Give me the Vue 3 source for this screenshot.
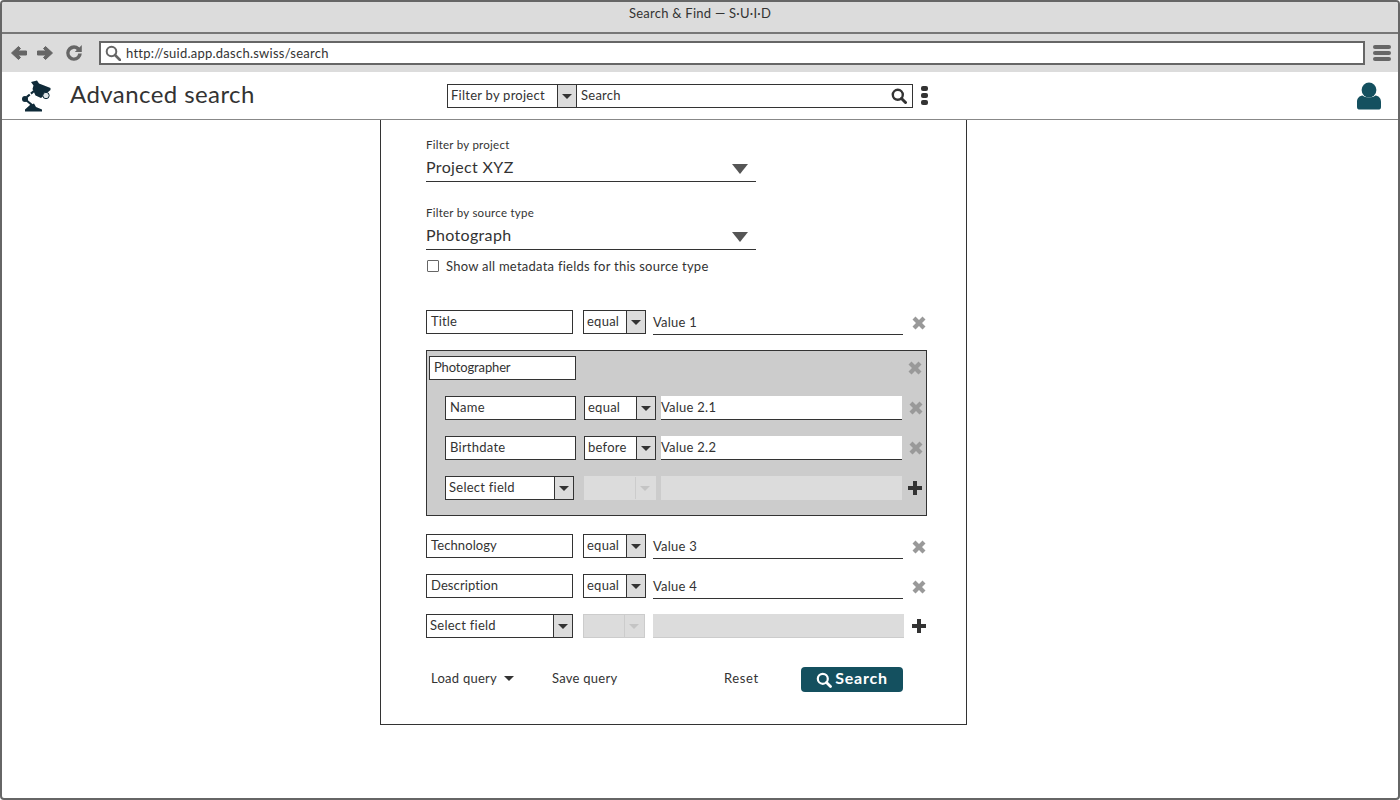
<script setup>
const topFields = [
  { name: "Title", op: "equal", value: "Value 1" },
];
const subFields = [
  { name: "Name", op: "equal", value: "Value 2.1" },
  { name: "Birthdate", op: "before", value: "Value 2.2" },
];
const lowerFields = [
  { name: "Technology", op: "equal", value: "Value 3" },
  { name: "Description", op: "equal", value: "Value 4" },
];
</script>

<template>
  <div class="window">
    <div class="titlebar">Search &amp; Find — S·U·I·D</div>
    <div class="toolbar">
      <svg class="nav" viewBox="0 0 18 16" width="18" height="16"><path d="M8.5 1.5 L1.5 8 L8.5 14.5 L10.5 12.4 L8 10 H16.5 V6 H8 L10.5 3.6 Z" /></svg>
      <svg class="nav second" viewBox="0 0 18 16" width="18" height="16"><path d="M9.5 1.5 L16.5 8 L9.5 14.5 L7.5 12.4 L10 10 H1.5 V6 H10 L7.5 3.6 Z" /></svg>
      <svg class="reload" viewBox="0 0 16 16" width="16" height="16"><path d="M8 0.2 A7.8 7.8 0 1 0 15.8 8.4 H12.2 A4.3 4.3 0 1 1 10.8 5 L8.8 7 H15.8 V0 L13.4 2.4 A7.8 7.8 0 0 0 8 0.2 Z" /></svg>
      <div class="address">
        <svg viewBox="0 0 16 16" width="16" height="16" class="addr-icon"><circle cx="6.5" cy="6.5" r="4.8" fill="none" stroke="#666" stroke-width="2" /><path d="M10 10 L15 15" stroke="#666" stroke-width="2.6" stroke-linecap="round" /></svg>
        <span>http://suid.app.dasch.swiss/search</span>
      </div>
      <div class="burger"><i></i><i></i><i></i></div>
    </div>

    <header class="appbar">
      <svg class="logo" viewBox="0 0 30 32" width="30" height="32">
        <path fill="#0f2a38" d="M9 2 L15 0.5 L17 3.5 L28.5 8 L28.5 10 L19 18 L13.5 15.5 L10.5 9 L11.5 5.5 Z" />
        <circle cx="24" cy="15.5" r="3.2" fill="#dfe5e8" stroke="#0f2a38" stroke-width="1" />
        <path stroke="#0f2a38" stroke-width="2.2" fill="none" stroke-dasharray="4 1.5" d="M12 11 L3 18.5" />
        <path stroke="#0f2a38" stroke-width="2.2" fill="none" d="M4 20 L10 25" />
        <circle cx="3" cy="19" r="3" fill="#0f2a38" />
        <path fill="#0f2a38" d="M8 25 L12 23.5 L14 27 L20 29.5 L20 31.5 L3 31.5 L3 29.5 Z" />
      </svg>
      <h1>Advanced search</h1>
      <div class="top-search">
        <div class="pick wide">
          <span class="pick-text">Filter by project</span>
          <span class="pick-arrow"></span>
        </div>
        <div class="search-box">
          <span>Search</span>
          <svg viewBox="0 0 16 16" width="16" height="16"><circle cx="6.8" cy="6.8" r="5" fill="none" stroke="#333" stroke-width="2.4" /><path d="M10.5 10.5 L14.5 14.5" stroke="#333" stroke-width="3" stroke-linecap="round" /></svg>
        </div>
        <div class="kebab"><i></i><i></i><i></i></div>
      </div>
      <svg class="user" viewBox="0 0 24 28" width="24" height="28">
        <circle cx="12" cy="8" r="7.4" fill="#14505f" />
        <path fill="#14505f" d="M5.5 13.5 C8 16 16 16 18.5 13.5 C22 14 24 16.5 24 20 V25 C24 27 23 27.6 21 27.6 H3 C1 27.6 0 27 0 25 V20 C0 16.5 2 14 5.5 13.5 Z" />
      </svg>
    </header>

    <main class="stage">
      <section class="panel">
        <label class="small-label">Filter by project</label>
        <div class="big-select">
          <span>Project XYZ</span>
          <b class="big-arrow"></b>
        </div>
        <label class="small-label second-label">Filter by source type</label>
        <div class="big-select">
          <span>Photograph</span>
          <b class="big-arrow"></b>
        </div>
        <div class="check-row">
          <span class="check"></span>
          <span>Show all metadata fields for this source type</span>
        </div>

        <div class="row first-row" v-for="f in topFields" :key="f.name">
          <div class="name">{{ f.name }}</div>
          <div class="op"><span>{{ f.op }}</span><i class="pick-arrow"></i></div>
          <div class="val">{{ f.value }}</div>
          <svg class="cross" viewBox="0 0 14 14" width="14" height="14"><path d="M0.5 3.5 L3.5 0.5 L7 4 L10.5 0.5 L13.5 3.5 L10 7 L13.5 10.5 L10.5 13.5 L7 10 L3.5 13.5 L0.5 10.5 L4 7 Z" /></svg>
        </div>

        <div class="group">
          <div class="group-head">
            <div class="name head-name">Photographer</div>
            <svg class="cross" viewBox="0 0 14 14" width="14" height="14"><path d="M0.5 3.5 L3.5 0.5 L7 4 L10.5 0.5 L13.5 3.5 L10 7 L13.5 10.5 L10.5 13.5 L7 10 L3.5 13.5 L0.5 10.5 L4 7 Z" /></svg>
          </div>
          <div class="sub" v-for="f in subFields" :key="f.name">
            <div class="name sub-name">{{ f.name }}</div>
            <div class="op sub-op"><span>{{ f.op }}</span><i class="pick-arrow"></i></div>
            <div class="val sub-val">{{ f.value }}</div>
            <svg class="cross" viewBox="0 0 14 14" width="14" height="14"><path d="M0.5 3.5 L3.5 0.5 L7 4 L10.5 0.5 L13.5 3.5 L10 7 L13.5 10.5 L10.5 13.5 L7 10 L3.5 13.5 L0.5 10.5 L4 7 Z" /></svg>
          </div>
          <div class="sub">
            <div class="field-pick sub-pick"><span>Select field</span><i class="pick-arrow"></i></div>
            <div class="op-off sub-off"><i></i></div>
            <div class="val-off sub-val-off"></div>
            <svg class="plus" viewBox="0 0 14 14" width="14" height="14"><path d="M5 0 H9 V5 H14 V9 H9 V14 H5 V9 H0 V5 H5 Z" /></svg>
          </div>
        </div>

        <div class="row lower" v-for="f in lowerFields" :key="f.name">
          <div class="name">{{ f.name }}</div>
          <div class="op"><span>{{ f.op }}</span><i class="pick-arrow"></i></div>
          <div class="val">{{ f.value }}</div>
          <svg class="cross" viewBox="0 0 14 14" width="14" height="14"><path d="M0.5 3.5 L3.5 0.5 L7 4 L10.5 0.5 L13.5 3.5 L10 7 L13.5 10.5 L10.5 13.5 L7 10 L3.5 13.5 L0.5 10.5 L4 7 Z" /></svg>
        </div>
        <div class="row lower">
          <div class="field-pick"><span>Select field</span><i class="pick-arrow"></i></div>
          <div class="op-off"><i></i></div>
          <div class="val-off"></div>
          <svg class="plus" viewBox="0 0 14 14" width="14" height="14"><path d="M5 0 H9 V5 H14 V9 H9 V14 H5 V9 H0 V5 H5 Z" /></svg>
        </div>

        <div class="actions">
          <span class="load">Load query <i></i></span>
          <span class="save">Save query</span>
          <span class="reset">Reset</span>
          <button class="go">
            <svg viewBox="0 0 16 16" width="16" height="16"><circle cx="6.8" cy="6.8" r="5" fill="none" stroke="#fff" stroke-width="2.2" /><path d="M10.5 10.5 L14.5 14.5" stroke="#fff" stroke-width="2.8" stroke-linecap="round" /></svg>
            Search
          </button>
        </div>
      </section>
    </main>
  </div>
</template>

<style>
html, body { margin: 0; background: #fff; }
</style>

<style scoped>
.window {
  width: 1400px;
  height: 800px;
  box-sizing: border-box;
  border: 2px solid #666;
  border-radius: 4px;
  overflow: hidden;
  background: #fff;
  font-family: Lato, "Noto Sans", sans-serif;
  font-size: 13px;
  color: #333;
  letter-spacing: 0.25px;
}
.titlebar {
  height: 30px;
  line-height: 23px;
  text-align: center;
  background: #dcdcdc;
  border-bottom: 2px solid #777;
  box-sizing: content-box;
}
.toolbar {
  height: 38px;
  background: #dcdcdc;
  display: flex;
  align-items: center;
  padding-left: 8px;
}
.nav { fill: #666; stroke: #666; stroke-width: 1; stroke-linejoin: round; }
.nav.second { margin-left: 8px; }
.reload { fill: #666; margin-left: 12px; }
.address {
  width: 1266px;
  height: 24px;
  box-sizing: border-box;
  margin-left: 17px;
  background: #fff;
  border: 2px solid #666;
  display: flex;
  align-items: center;
  padding-left: 4px;
  gap: 5px;
}
.addr-icon { flex: none; }
.burger {
  margin-left: 8px;
  display: flex;
  flex-direction: column;
  gap: 2px;
}
.burger i { display: block; width: 18px; height: 4px; border-radius: 2px; background: #666; }

.appbar {
  height: 47px;
  border-bottom: 1px solid #888;
  display: flex;
  align-items: center;
  padding-left: 20px;
  position: relative;
}
.logo { flex: none; }
h1 {
  margin: 0 0 4px 18px;
  font-size: 24px;
  font-weight: 400;
  width: 377px;
  letter-spacing: 0.42px;
  flex: none;
}
.top-search { display: flex; align-items: center; height: 24px; }
.pick { display: flex; }
.pick.wide {
  width: 129px;
  height: 24px;
  box-sizing: border-box;
  border: 1px solid #333;
  border-right: 0;
  align-items: center;
  justify-content: space-between;
  padding-left: 3px;
}
.pick-text { padding-bottom: 2px; }
.pick-arrow {
  flex: none;
  width: 19px;
  height: 100%;
  box-sizing: border-box;
  background: #dcdcdc;
  border-left: 1px solid #333;
  position: relative;
  display: block;
}
.pick-arrow::after {
  content: "";
  position: absolute;
  left: 50%;
  top: 50%;
  margin: -2px 0 0 -5px;
  border: 5px solid transparent;
  border-top: 5px solid #333;
  border-bottom: 0;
}
.search-box {
  width: 337px;
  height: 24px;
  box-sizing: border-box;
  border: 1px solid #333;
  display: flex;
  align-items: center;
  justify-content: space-between;
  padding: 0 5px 0 4px;
}
.search-box span { padding-bottom: 2px; }
.kebab { margin-left: 8px; display: flex; flex-direction: column; gap: 2px; }
.kebab i { display: block; width: 7px; height: 5px; border-radius: 2px; background: #333; }
.user { position: absolute; left: 1355px; top: 10px; }

.stage { display: flex; padding-left: 378px; }
.panel {
  width: 587px;
  height: 606px;
  box-sizing: border-box;
  margin-top: -1px;
  border: 1px solid #333;
  padding: 18px 0 0 45px;
}
.small-label { display: block; font-size: 11.5px; line-height: 14px; }
.second-label { margin-top: 24px; }
.big-select {
  width: 330px;
  height: 30px;
  box-sizing: border-box;
  border-bottom: 1px solid #333;
  font-size: 16px;
  letter-spacing: 0.35px;
  display: flex;
  justify-content: space-between;
  align-items: center;
}
.big-arrow {
  margin-right: 8px;
  margin-top: 5px;
  border: 8px solid transparent;
  border-top: 10px solid #555;
  border-bottom: 0;
}
.check-row { display: flex; align-items: center; gap: 7px; margin-top: 8px; height: 16px; padding-left: 1px; }
.check { width: 12px; height: 12px; border: 1px solid #666; border-radius: 1px; box-sizing: border-box; display: block; }

.row { display: flex; align-items: flex-start; height: 24px; }
.first-row { margin-top: 36px; }
.lower { margin-top: 16px; }
.group + .lower { margin-top: 18px; }
.name {
  width: 147px;
  height: 24px;
  box-sizing: border-box;
  border: 1px solid #333;
  background: #fff;
  line-height: 21px;
  padding-left: 4px;
  letter-spacing: 0.1px;
  flex: none;
}
.head-name { padding-left: 4px; letter-spacing: -0.15px; }
.op {
  width: 63px;
  height: 24px;
  box-sizing: border-box;
  border: 1px solid #333;
  background: #fff;
  display: flex;
  justify-content: space-between;
  line-height: 21px;
  padding-left: 3px;
  margin-left: 10px;
  flex: none;
}
.val {
  width: 250px;
  height: 25px;
  box-sizing: border-box;
  border-bottom: 1px solid #333;
  margin-left: 7px;
  line-height: 25px;
  flex: none;
}
.cross { fill: #999; margin-left: 9px; margin-top: 6px; flex: none; }
.plus { fill: #333; margin-left: 8px; margin-top: 5px; flex: none; }

.field-pick {
  width: 147px;
  height: 24px;
  box-sizing: border-box;
  border: 1px solid #333;
  background: #fff;
  display: flex;
  justify-content: space-between;
  line-height: 21px;
  padding-left: 3px;
  flex: none;
}
.op-off {
  width: 62px;
  height: 24px;
  box-sizing: border-box;
  background: #dcdcdc;
  border: 1px solid #ccc;
  margin-left: 10px;
  position: relative;
  flex: none;
}
.op-off i {
  position: absolute;
  right: 0;
  top: 0;
  bottom: 0;
  width: 19px;
  border-left: 1px solid #ccc;
}
.op-off i::after {
  content: "";
  position: absolute;
  left: 4px;
  top: 9px;
  border: 5px solid transparent;
  border-top: 5px solid #c4c4c4;
  border-bottom: 0;
}
.val-off {
  width: 251px;
  height: 24px;
  box-sizing: border-box;
  background: #dcdcdc;
  border-bottom: 1px solid #ccc;
  margin-left: 8px;
  flex: none;
}

.group {
  width: 501px;
  height: 166px;
  box-sizing: border-box;
  margin-top: 16px;
  background: #ccc;
  border: 1px solid #333;
  padding: 5px 0 0 2px;
}
.group-head { display: flex; height: 24px; align-items: flex-start; justify-content: space-between; }
.group-head .cross { margin: 5px 4px 0 0; fill: #999; }
.sub { display: flex; align-items: flex-start; height: 24px; margin-top: 16px; padding-left: 16px; }
.sub-name { width: 131px; padding-left: 4px; letter-spacing: 0.25px; }
.sub-op { width: 72px; margin-left: 8px; padding-left: 3px; }
.sub-val { width: 241px; background: #fff; margin-left: 5px; height: 24px; padding-left: 0; line-height: 22px; }
.sub .cross { margin-left: 7px; margin-top: 5px; }
.sub .plus { margin-left: 6px; margin-top: 5px; }
.sub-pick { width: 129px; }
.sub-off { width: 72px; border-color: #dcdcdc; background: #dcdcdc; margin-left: 10px; }
.sub-off i { border-left-color: #ccc; }
.sub-val-off { width: 241px; margin-left: 5px; border: 0; }

.actions { display: flex; align-items: center; height: 25px; margin-top: 29px; padding-left: 5px; }
.load, .save, .reset { margin-bottom: 3px; flex: none; }
.load { width: 121px; }
.load i {
  display: inline-block;
  margin-left: 4px;
  vertical-align: 2px;
  border: 5px solid transparent;
  border-top: 5px solid #333;
  border-bottom: 0;
}
.save { width: 172px; }
.reset { width: 77px; letter-spacing: 0.6px; }
.go {
  width: 102px;
  height: 25px;
  border: 0;
  border-radius: 4px;
  background: #14505f;
  color: #fff;
  font: inherit;
  font-size: 16px;
  font-weight: 700;
  letter-spacing: 0.8px;
  display: flex;
  align-items: center;
  justify-content: center;
  gap: 3px;
  padding: 0 0 5px;
}
.go svg { margin-top: 5px; }
</style>
